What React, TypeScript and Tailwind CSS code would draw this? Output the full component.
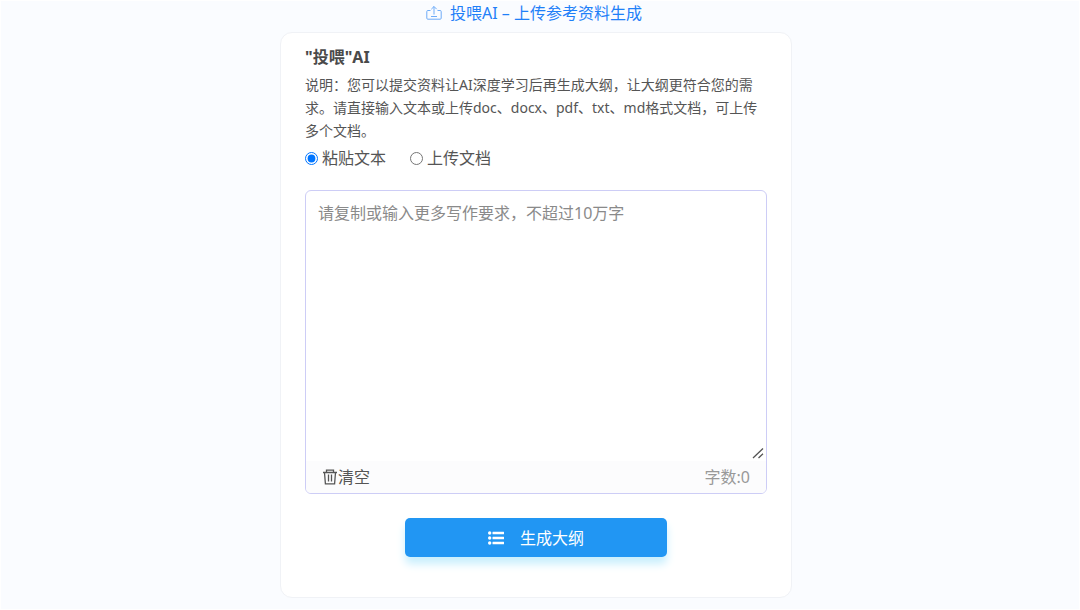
import { useState } from "react";

function UploadIcon() {
  return (
    <svg viewBox="0 0 16 16" className="h-4 w-4" fill="none" stroke="currentColor" strokeWidth="1" aria-hidden="true">
      <path d="M4.500 5.500H1.800a1 1 0 0 0-1 1v6.700a1 1 0 0 0 1 1h12.400a1 1 0 0 0 1-1V6.500a1 1 0 0 0-1-1h-2.700" />
      <path d="M8 9.500V1.500M5.300 4.200 8 1.500l2.700 2.700M5 11.500h6" />
    </svg>
  );
}

function TrashIcon() {
  return (
    <svg viewBox="0 0 16 16" className="h-4 w-4" fill="none" stroke="currentColor" strokeWidth="1.300" aria-hidden="true">
      <path d="M1 3.500h14M4.500 3.300V1.200h7v2.100M2.500 3.500l.9 11.300h9.200l.9-11.300M6.500 5.500v7M9.500 5.500v7" />
    </svg>
  );
}

function ListIcon() {
  return (
    <svg viewBox="0 0 16 14" className="h-3.5 w-4" fill="currentColor" aria-hidden="true">
      <circle cx="1.700" cy="2" r="1.700" />
      <circle cx="1.700" cy="7" r="1.700" />
      <circle cx="1.700" cy="12" r="1.700" />
      <rect x="4.500" y="0.700" width="11.500" height="2.600" rx="0.400" />
      <rect x="4.500" y="5.700" width="11.500" height="2.600" rx="0.400" />
      <rect x="4.500" y="10.700" width="11.500" height="2.600" rx="0.400" />
    </svg>
  );
}

export default function App() {
  const [mode, setMode] = useState("text");
  const [text, setText] = useState("");

  return (
    <div className="min-h-screen border border-white bg-[#fafcff] pr-6 pb-2 pl-4 font-['Noto_Sans','Noto_Sans_CJK_SC',sans-serif] text-base text-[#555]">
      <a href="#feed" className="flex h-6 items-center justify-center gap-2 pr-1 text-[#1f80f8]">
        <span className="text-[#6eacf8]">
          <UploadIcon />
        </span>
        投喂AI – 上传参考资料生成
      </a>

      <main id="feed" className="mx-auto mt-[7px] w-full max-w-[512px] rounded-xl border border-[#f0f2f6] bg-white px-6 pt-3 pb-10">
        <h1 className="leading-6 font-bold text-[#4a4a4a]">"投喂"AI</h1>
        <p className="mt-1 pr-1 text-sm leading-[23px]">
          说明：您可以提交资料让AI深度学习后再生成大纲，让大纲更符合您的需求。请直接输入文本或上传doc、docx、pdf、txt、md格式文档，可上传多个文档。
        </p>

        <div className="mt-1 flex h-6 items-center gap-6">
          <label className="flex items-center gap-1">
            <input type="radio" name="mode" className="accent-[#0075ff]" checked={mode === "text"} onChange={() => setMode("text")} />
            粘贴文本
          </label>
          <label className="flex items-center gap-1">
            <input type="radio" name="mode" className="accent-[#0075ff]" checked={mode === "file"} onChange={() => setMode("file")} />
            上传文档
          </label>
        </div>

        <div className="mt-5 overflow-hidden rounded-md border border-[#cdcdf6]">
          <div className="relative">
            <textarea
              aria-label="写作要求"
              className="block h-[270px] w-full resize-none px-3 py-2.5 leading-6 outline-none placeholder:text-[#8a8a8a]"
              placeholder="请复制或输入更多写作要求，不超过10万字"
              value={text}
              onChange={(e) => setText(e.target.value)}
            />
            <svg viewBox="0 0 12 12" className="absolute right-0.5 bottom-0.5 h-3 w-3 text-[#555]" fill="none" stroke="currentColor" strokeWidth="1.300" aria-hidden="true">
              <path d="M1 11 11 1.500M6.500 11 11 6.700" />
            </svg>
          </div>
          <div className="flex h-8 items-center justify-between bg-[#fcfcfd] px-4">
            <button type="button" className="flex items-center" onClick={() => setText("")}>
              <TrashIcon />
              清空
            </button>
            <span className="text-[#999]">字数:{text.length}</span>
          </div>
        </div>

        <button
          type="button"
          className="mx-auto mt-6 flex h-[39px] w-[262px] items-center justify-center gap-4 rounded-[5px] bg-[#2196f3] text-white shadow-[0_7px_8px_#c9effd]"
        >
          <ListIcon />
          生成大纲
        </button>
      </main>
    </div>
  );
}
